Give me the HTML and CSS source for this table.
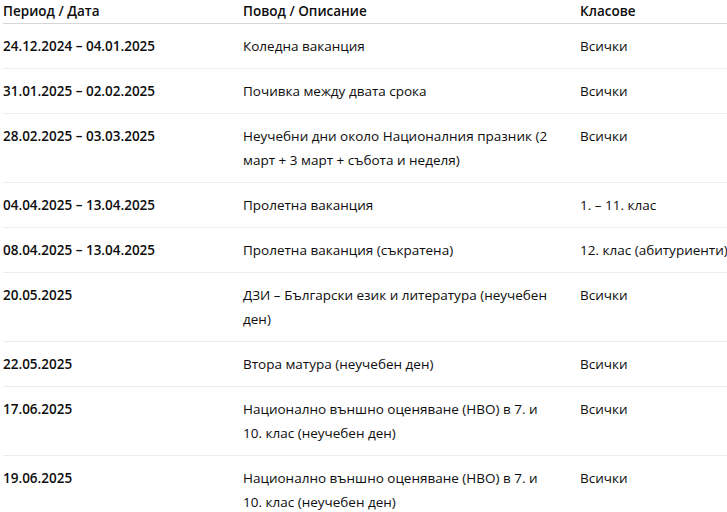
FILE: index.html
```html
<!DOCTYPE html>
<html lang="bg">
<head>
<meta charset="utf-8">
<link rel="stylesheet" href="styles.css">
</head>
<body>
<table class="schedule">
  <colgroup>
    <col class="col-date">
    <col class="col-desc">
    <col class="col-class">
  </colgroup>
  <thead>
    <tr><th>Период / Дата</th><th>Повод / Описание</th><th>Класове</th></tr>
  </thead>
  <tbody>
    <tr><td class="date">24.12.2024 – 04.01.2025</td><td>Коледна ваканция</td><td>Всички</td></tr>
    <tr><td class="date">31.01.2025 – 02.02.2025</td><td>Почивка между двата срока</td><td>Всички</td></tr>
    <tr><td class="date">28.02.2025 – 03.03.2025</td><td>Неучебни дни около Националния празник (2 март + 3 март + събота и неделя)</td><td>Всички</td></tr>
    <tr><td class="date">04.04.2025 – 13.04.2025</td><td>Пролетна ваканция</td><td>1. – 11. клас</td></tr>
    <tr><td class="date">08.04.2025 – 13.04.2025</td><td>Пролетна ваканция (съкратена)</td><td>12. клас (абитуриенти)</td></tr>
    <tr><td class="date">20.05.2025</td><td>ДЗИ – Български език и литература (неучебен ден)</td><td>Всички</td></tr>
    <tr><td class="date">22.05.2025</td><td>Втора матура (неучебен ден)</td><td>Всички</td></tr>
    <tr><td class="date">17.06.2025</td><td>Национално външно оценяване (НВО) в 7. и 10. клас (неучебен ден)</td><td>Всички</td></tr>
    <tr><td class="date">19.06.2025</td><td>Национално външно оценяване (НВО) в 7. и 10. клас (неучебен ден)</td><td>Всички</td></tr>
  </tbody>
</table>
</body>
</html>
```
FILE: styles.css
```css
html, body {
  margin: 0;
  padding: 0;
  background: #ffffff;
}
body {
  font-family: "Open Sans", "Noto Sans", sans-serif;
  font-size: 13.5px;
  color: #0d0d0d;
  overflow: hidden;
}
.schedule {
  border-collapse: collapse;
  margin-left: 3px;
  width: 730px;
  table-layout: fixed;
}
.col-date { width: 240px; }
.col-desc { width: 337px; }
.col-class { width: 153px; }
.schedule th {
  text-align: left;
  font-weight: 600;
  padding: 0 24px 0 0;
  line-height: 23px;
  height: 22px;
  border-bottom: 1px solid #d6d6d6;
  vertical-align: top;
}
.schedule td {
  text-align: left;
  vertical-align: top;
  padding: 10px 24px 10px 0;
  line-height: 24px;
  border-bottom: 1px solid #ececec;
}
.schedule td.date {
  font-weight: 600;
}
.schedule td:last-child,
.schedule th:last-child {
  padding-right: 0;
  white-space: nowrap;
}
```
